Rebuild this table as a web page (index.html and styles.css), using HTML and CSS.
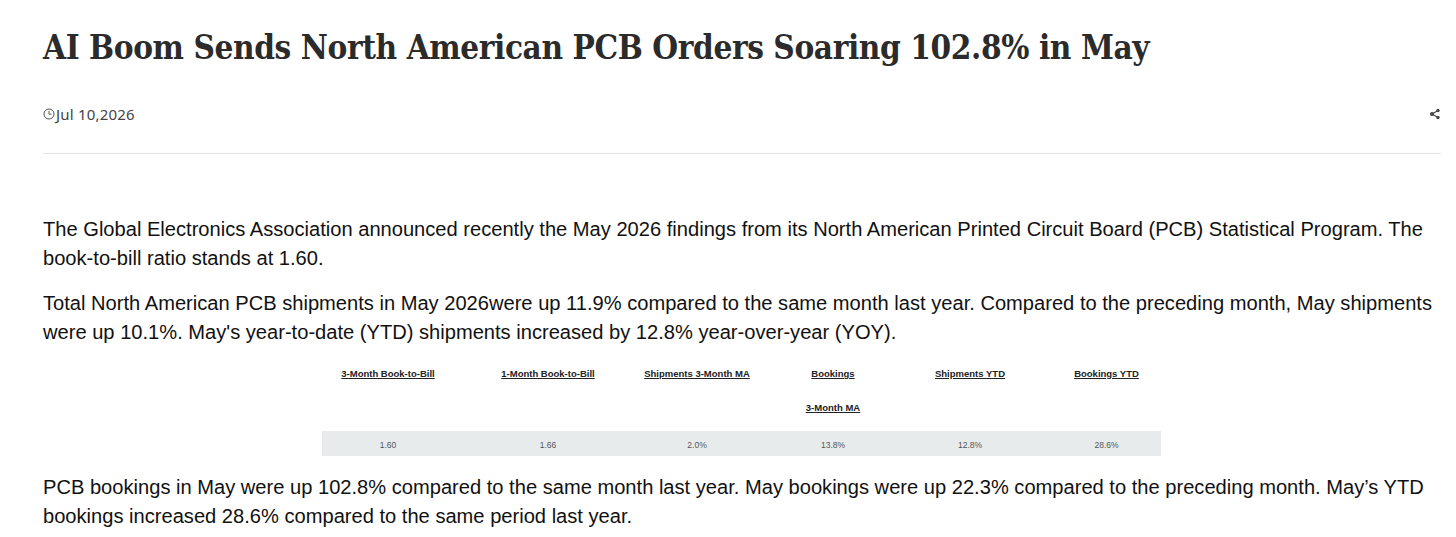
FILE: index.html
```html
<!DOCTYPE html>
<html lang="en">
<head>
<meta charset="utf-8">
<title>AI Boom Sends North American PCB Orders Soaring 102.8% in May</title>
<link rel="stylesheet" href="styles.css">
</head>
<body>
<article class="article">
  <h1 class="title">AI Boom Sends North American PCB Orders Soaring 102.8% in May</h1>
  <div class="meta">
    <div class="date">
      <svg class="clock" viewBox="0 0 12 12" width="12" height="12" aria-hidden="true">
        <circle cx="6" cy="6" r="5" fill="none" stroke="#555" stroke-width="1"/>
        <path d="M6 3v3.2h2.4" fill="none" stroke="#555" stroke-width="1"/>
      </svg>
      <span>Jul 10,2026</span>
    </div>
    <svg class="share" viewBox="0 0 12 12" width="12" height="12" aria-hidden="true">
      <line x1="3" y1="6" x2="9" y2="2.5" stroke="#444" stroke-width="1.2"/>
      <line x1="3" y1="6" x2="9" y2="9.5" stroke="#444" stroke-width="1.2"/>
      <circle cx="3" cy="6" r="2" fill="#444"/>
      <circle cx="9" cy="2.5" r="1.7" fill="#444"/>
      <circle cx="9" cy="9.5" r="1.7" fill="#444"/>
    </svg>
  </div>
  <div class="body">
    <p>The Global Electronics Association announced recently the May 2026 findings from its North American Printed Circuit Board (PCB) Statistical Program. The book-to-bill ratio stands at 1.60.</p>
    <p>Total North American PCB shipments in May 2026were up 11.9% compared to the same month last year. Compared to the preceding month, May shipments were up 10.1%. May's year-to-date (YTD) shipments increased by 12.8% year-over-year (YOY).</p>
    <div class="stats">
      <div class="row head">
        <div class="cell"><u>3-Month Book-to-Bill</u></div>
        <div class="cell"><u>1-Month Book-to-Bill</u></div>
        <div class="cell"><u>Shipments 3-Month MA</u></div>
        <div class="cell stack"><u>Bookings</u><u>3-Month MA</u></div>
        <div class="cell"><u>Shipments YTD</u></div>
        <div class="cell last"><u>Bookings YTD</u></div>
      </div>
      <div class="row data">
        <div class="cell">1.60</div>
        <div class="cell">1.66</div>
        <div class="cell">2.0%</div>
        <div class="cell">13.8%</div>
        <div class="cell">12.8%</div>
        <div class="cell last">28.6%</div>
      </div>
    </div>
    <p>PCB bookings in May were up 102.8% compared to the same month last year. May bookings were up 22.3% compared to the preceding month. May’s YTD bookings increased 28.6% compared to the same period last year.</p>
  </div>
</article>
</body>
</html>
```
FILE: styles.css
```css
* { box-sizing: border-box; }
html, body { margin: 0; padding: 0; background: #fff; }
body { overflow: hidden; }

.article {
  padding: 26px 15px 0 43px;
}

.title {
  margin: 0;
  font-family: "DejaVu Serif Condensed", "DejaVu Serif", serif;
  font-stretch: semi-condensed;
  font-weight: bold;
  font-size: 33px;
  line-height: 44px;
  letter-spacing: -0.4px;
  color: #2b2b2b;
}

.meta {
  margin-top: 34px;
  display: flex;
  align-items: center;
  justify-content: space-between;
  padding-bottom: 29px;
  border-bottom: 1px solid #e2e2e2;
}

.date {
  display: flex;
  align-items: center;
  gap: 1px;
  font-family: "Noto Sans", sans-serif;
  font-size: 15px;
  letter-spacing: 0.2px;
  color: #444;
  line-height: 20px;
}

.clock { display: block; }
.share { display: block; margin-right: 0; }

.body {
  padding-top: 61px;
  font-family: "Liberation Sans", Arial, sans-serif;
  font-size: 20.13px;
  line-height: 29px;
  color: #111;
}

.body p { margin: 0 0 16px 0; }

.stats {
  width: 839px;
  margin: 2px 0 0 279px;
  font-family: "Liberation Sans", Arial, sans-serif;
  padding-bottom: 17px;
}

.row {
  display: grid;
  grid-template-columns: 132px 188px 110px 162px 112px 135px;
  text-align: center;
}

.row .last { padding-left: 26px; }

.head {
  font-size: 9.5px;
  font-weight: bold;
  color: #222;
  line-height: 14px;
}

.head .cell { padding-top: 4px; }
.head u { text-underline-offset: 1px; }

.stack { display: flex; flex-direction: column; gap: 20px; }

.data {
  margin-top: 16px;
  background: #e8ebeb;
  height: 25px;
  align-items: center;
  font-size: 8.5px;
  color: #555;
}
```
